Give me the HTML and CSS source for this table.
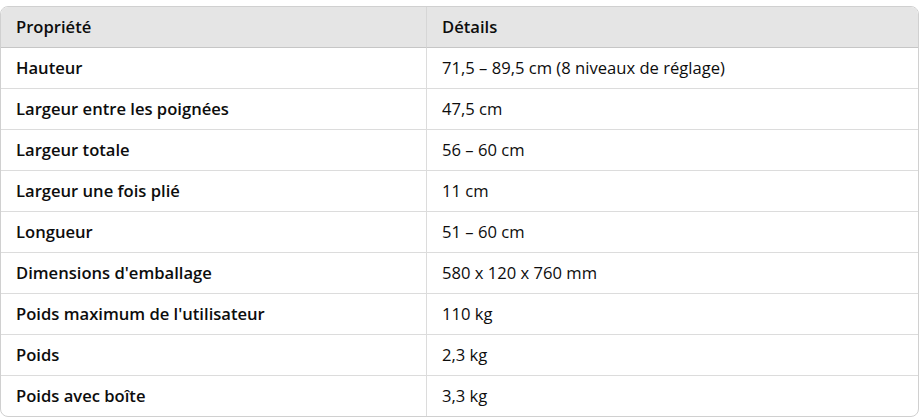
FILE: index.html
```html
<!DOCTYPE html>
<html lang="fr">
<head>
<meta charset="utf-8">
<link rel="stylesheet" href="styles.css">
</head>
<body>
<div class="wrap">
<table class="spec">
<thead>
<tr><th class="c1">Propriété</th><th>Détails</th></tr>
</thead>
<tbody>
<tr><td class="c1">Hauteur</td><td>71,5 – 89,5 cm (8 niveaux de réglage)</td></tr>
<tr><td class="c1">Largeur entre les poignées</td><td>47,5 cm</td></tr>
<tr><td class="c1">Largeur totale</td><td>56 – 60 cm</td></tr>
<tr><td class="c1">Largeur une fois plié</td><td>11 cm</td></tr>
<tr><td class="c1">Longueur</td><td>51 – 60 cm</td></tr>
<tr><td class="c1">Dimensions d'emballage</td><td>580 x 120 x 760 mm</td></tr>
<tr><td class="c1">Poids maximum de l'utilisateur</td><td>110 kg</td></tr>
<tr><td class="c1">Poids</td><td>2,3 kg</td></tr>
<tr><td class="c1">Poids avec boîte</td><td>3,3 kg</td></tr>
</tbody>
</table>
</div>
</body>
</html>
```
FILE: styles.css
```css
html, body { margin: 0; padding: 0; background: #fff; }
body { font-family: "Open Sans", "Noto Sans", sans-serif; font-size: 16.6px; color: #0d0d0d; }
.wrap { padding: 6px 4px 0 0; }
.spec {
  width: 919px;
  border-collapse: separate;
  border-spacing: 0;
  border: 1px solid #d0d0d0;
  border-radius: 8px;
  overflow: hidden;
  table-layout: fixed;
}
.spec th, .spec td {
  height: 41px;
  padding: 0 15px;
  text-align: left;
  vertical-align: middle;
  box-sizing: border-box;
  line-height: 20px;
}
.spec th {
  background: #e5e5e5;
  font-weight: 600;
  border-bottom: 1px solid #c6c6c6;
}
.spec td { border-bottom: 1px solid #dcdcdc; }
.spec tbody tr:last-child td { border-bottom: none; height: 40px; }
.spec td.c1 { font-weight: 600; }
.spec .c1 { width: 426px; border-right: 1px solid #dcdcdc; }
.spec th.c1 { border-right-color: #d6d6d6; }
```
